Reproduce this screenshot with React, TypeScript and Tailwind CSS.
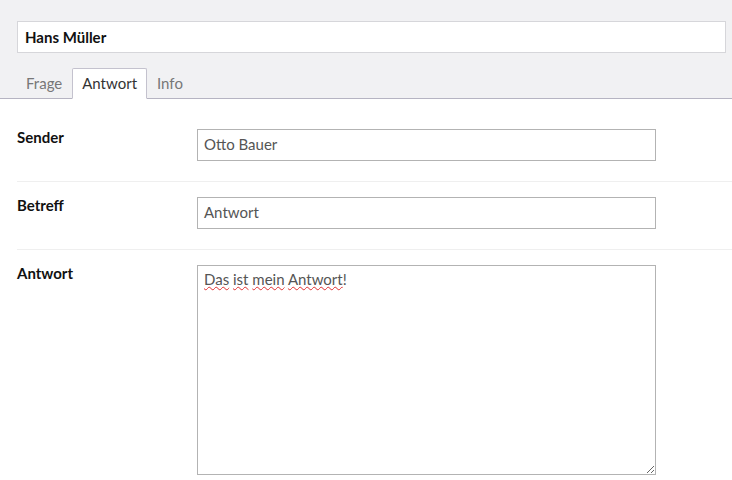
import React from 'react'

const rows = [
  { label: 'Sender', value: 'Otto Bauer' },
  { label: 'Betreff', value: 'Antwort' },
]

export default function App() {
  return (
    <div className="w-[732px] h-[480px] bg-white overflow-hidden font-['Lato','Noto_Sans',sans-serif] text-[15px] text-[#222]">
      {/* kopf */}
      <div className="bg-[#f1f1f3] pt-[21px] px-[17px] pr-[6px] border-b border-[#b6b4c2]">
        <div className="h-[32px] bg-white border border-[#d6d6da] flex items-center px-[7px] font-bold text-[#111]">
          Hans Müller
        </div>
        <div className="flex mt-[15px] ml-[-1px] -mb-px">
          {['Frage', 'Antwort', 'Info'].map(t => (
            <div
              key={t}
              className={
                t === 'Antwort'
                  ? 'h-[31px] px-[9px] flex items-center bg-white border border-[#c4c2ce] border-b-white rounded-t-[2px] text-[#333]'
                  : 'h-[31px] px-[9px] flex items-center text-[#777] border border-transparent'
              }
            >
              {t}
            </div>
          ))}
        </div>
      </div>

      {/* formular */}
      <div className="pl-[17px] pt-[15px]">
        {rows.map(r => (
          <div key={r.label} className="flex border-b border-[#efefef] pt-[15px] pb-[20px] pr-[76px]">
            <div className="w-[180px] font-bold text-[#111] -mt-[3px]">{r.label}</div>
            <div className="flex-1 h-[32px] border border-[#b3b3b3] flex items-center px-[6px] pb-[2px] text-[#555]">
              {r.value}
            </div>
          </div>
        ))}
        <div className="flex pt-[15px] pr-[76px]">
          <div className="w-[180px] font-bold text-[#111] -mt-[3px]">Antwort</div>
          <div className="flex-1 h-[210px] border border-[#b3b3b3] px-[6px] py-[2px] text-[#555] overflow-auto resize-y">
            {['Das', 'ist', 'mein', 'Antwort'].map((w, i) => (
              <React.Fragment key={i}>
                <span className="underline decoration-wavy decoration-[#e03030] decoration-1 underline-offset-[1px]">{w}</span>
                {i < 3 ? ' ' : '!'}
              </React.Fragment>
            ))}
          </div>
        </div>
      </div>
    </div>
  )
}
